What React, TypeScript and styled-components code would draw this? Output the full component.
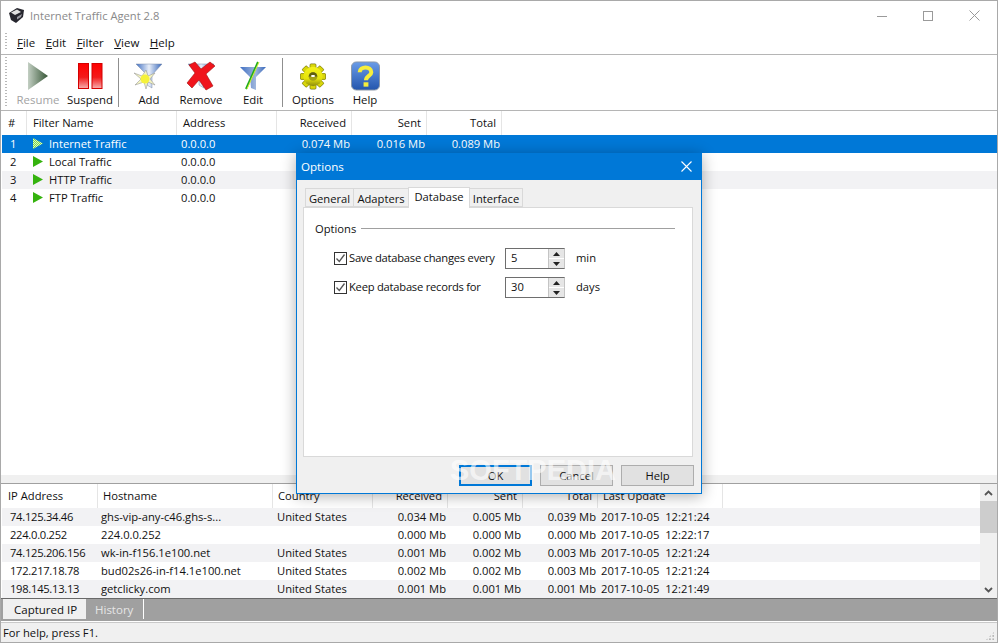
import styled, { createGlobalStyle } from "styled-components";

const GlobalStyle = createGlobalStyle`
  html, body { margin: 0; padding: 0; background: #fff; }
  body { font-family: "Open Sans", "Noto Sans", "Liberation Sans", sans-serif; font-size: 11.2px; color: #111; }
  * { box-sizing: border-box; }
`;

const Window = styled.div`
  position: relative;
  width: 998px;
  height: 643px;
  border: 1px solid #a9a9a9;
  display: flex;
  flex-direction: column;
  overflow: hidden;
  background: #fff;
`;

const TitleBar = styled.div`
  height: 29px;
  display: flex;
  align-items: center;
  padding-left: 7px;
  flex: none;
`;

const TitleText = styled.span`
  margin-left: 5px;
  color: #8a8a8a;
  font-size: 11.2px;
  flex: 1;
`;

const WinButton = styled.div`
  width: 46px;
  height: 29px;
  display: flex;
  align-items: center;
  justify-content: center;
`;

const MenuBar = styled.div`
  height: 25px;
  display: flex;
  align-items: center;
  gap: 10.5px;
  padding-left: 16px;
  font-size: 11.5px;
  border-bottom: 1px solid #b5b5b5;
  flex: none;
  position: relative;
`;

const MenuItem = styled.span`
  u { text-decoration: underline; }
`;

const Grip = styled.div<{ $top: number; $height: number }>`
  position: absolute;
  left: 4px;
  top: ${(p) => p.$top}px;
  height: ${(p) => p.$height}px;
  width: 2px;
  background-image: linear-gradient(#b8b8b8 50%, transparent 50%);
  background-size: 2px 3px;
`;

const Toolbar = styled.div`
  height: 56px;
  display: flex;
  padding-left: 11px;
  font-size: 11.4px;
  border-bottom: 1px solid #b5b5b5;
  flex: none;
  position: relative;
`;

const ToolButton = styled.div<{ $disabled?: boolean }>`
  width: 52px;
  display: flex;
  flex-direction: column;
  align-items: center;
  padding-top: 5px;
  color: ${(p) => (p.$disabled ? "#a3a3a3" : "#111")};
`;

const ToolIcon = styled.div`
  height: 32px;
  display: flex;
  align-items: center;
  justify-content: center;
`;

const ToolLabel = styled.span`
  white-space: nowrap;
`;

const ToolSep = styled.div<{ $left: number }>`
  width: 1px;
  margin: 3px 4px 3px ${(p) => p.$left}px;
  background: #8f8f8f;
`;

const UpperList = styled.div`
  flex: 1;
  display: flex;
  flex-direction: column;
  padding-left: 1px;
  min-height: 0;
`;

const upperCols = "25px 150px 100px 75px 75px 75px 1fr";
const lowerCols = "96px 175px 100px 75px 75px 75px 125px 1fr";

const HeaderRow = styled.div<{ $cols: string; $height: number }>`
  display: grid;
  grid-template-columns: ${(p) => p.$cols};
  height: ${(p) => p.$height}px;
  flex: none;
`;

const HeaderCell = styled.div<{ $right?: boolean; $pad: number; $noLine?: boolean }>`
  display: flex;
  align-items: center;
  justify-content: ${(p) => (p.$right ? "flex-end" : "flex-start")};
  padding: ${(p) => (p.$right ? `0 ${p.$pad}px 2px 0` : `0 0 2px ${p.$pad}px`)};
  border-right: ${(p) => (p.$noLine ? "none" : "1px solid #e5e5e5")};
  white-space: nowrap;
`;

const DataRow = styled.div<{ $cols: string; $bg: string; $fg?: string }>`
  display: grid;
  grid-template-columns: ${(p) => p.$cols};
  height: 18px;
  padding-bottom: 2px;
  align-items: center;
  background: ${(p) => p.$bg};
  color: ${(p) => p.$fg || "#111"};
  flex: none;
`;

const Cell = styled.div<{ $right?: boolean; $pad: number; $keepSpaces?: boolean; $tight?: boolean }>`
  padding: ${(p) => (p.$right ? `0 ${p.$pad}px 0 0` : `0 0 0 ${p.$pad}px`)};
  white-space: ${(p) => (p.$keepSpaces ? "pre" : "nowrap")};
  letter-spacing: ${(p) => (p.$tight ? "-0.28px" : "normal")};
  display: flex;
  align-items: center;
  justify-content: ${(p) => (p.$right ? "flex-end" : "flex-start")};
`;

const NameIcon = styled.span`
  display: inline-flex;
  width: 16px;
`;

const Splitter = styled.div`
  height: 9px;
  flex: none;
  background: #f0f0f0;
  border-bottom: 1px solid #a0a0a0;
`;

const LowerPane = styled.div`
  height: 114px;
  flex: none;
  display: flex;
`;

const LowerList = styled.div`
  width: 979px;
  padding-left: 1px;
  display: flex;
  flex-direction: column;
`;

const ScrollBar = styled.div`
  width: 17px;
  background: #f0f0f0;
  display: flex;
  flex-direction: column;
  align-items: center;
  justify-content: space-between;
`;

const ScrollArrow = styled.div`
  height: 17px;
  width: 100%;
  display: flex;
  align-items: center;
  justify-content: center;
`;

const ScrollThumb = styled.div`
  height: 32px;
  width: 100%;
  background: #cdcdcd;
`;

const ScrollTrack = styled.div`
  flex: 1;
  width: 100%;
`;

const TabStrip = styled.div`
  height: 24px;
  flex: none;
  background: #a0a0a0;
  border-top: 1px solid #696969;
  border-bottom: 1px solid #fff;
  display: flex;
  padding-left: 2px;
  font-size: 11.5px;
`;

const BottomTab = styled.div<{ $active?: boolean }>`
  width: ${(p) => (p.$active ? "83px" : "58px")};
  height: 20px;
  display: flex;
  align-items: center;
  padding-left: ${(p) => (p.$active ? "11px" : "9px")};
  background: ${(p) => (p.$active ? "#f0f0f0" : "transparent")};
  color: ${(p) => (p.$active ? "#111" : "#e6e6e6")};
  border-right: ${(p) => (p.$active ? "none" : "1px solid #fff")};
`;

const StatusBar = styled.div`
  height: 20px;
  flex: none;
  background: #f0f0f0;
  border-top: 1px solid #c9c9c9;
  display: flex;
  align-items: center;
  justify-content: space-between;
  padding-left: 2px;
`;

const ResizeGrip = styled.div`
  width: 10px;
  height: 10px;
  margin: 7px 2px 0 0;
  background-image: radial-gradient(#b5b5b5 1px, transparent 1.2px);
  background-size: 3.3px 3.3px;
  clip-path: polygon(100% 0, 100% 100%, 0 100%);
`;

const Dialog = styled.div`
  position: absolute;
  left: 295px;
  top: 152px;
  width: 406px;
  height: 341px;
  background: #f0f0f0;
  border: 1px solid #0078d7;
  box-shadow: 0 2px 14px rgba(0, 0, 0, 0.32);
  display: flex;
  flex-direction: column;
`;

const DialogTitle = styled.div`
  height: 26px;
  flex: none;
  background: #0078d7;
  color: #fff;
  font-size: 11.6px;
  display: flex;
  align-items: center;
  justify-content: space-between;
  padding: 0 9px 2px 4px;
`;

const TabRow = styled.div`
  display: flex;
  align-items: flex-end;
  height: 27px;
  padding-left: 9px;
  flex: none;
`;

const DialogTab = styled.div<{ $active?: boolean; $w: number }>`
  width: ${(p) => p.$w}px;
  height: ${(p) => (p.$active ? "21px" : "19px")};
  display: flex;
  align-items: center;
  justify-content: center;
  padding: ${(p) => (p.$active ? "0 0 3px" : "1px 0 0")};
  background: ${(p) => (p.$active ? "#fff" : "#f0f0f0")};
  border: 1px solid #d9d9d9;
  border-bottom: ${(p) => (p.$active ? "none" : "1px solid #d9d9d9")};
  margin-left: -1px;
  position: relative;
  z-index: ${(p) => (p.$active ? 1 : 0)};
  top: ${(p) => (p.$active ? "1px" : "0")};
`;

const TabPanel = styled.div`
  margin: 0 8px 0 6px;
  height: 250px;
  flex: none;
  background: #fff;
  border: 1px solid #d9d9d9;
  padding: 13px 17px 0 11px;
`;

const GroupTitle = styled.div`
  display: flex;
  align-items: center;
  gap: 5px;
  height: 14px;
  margin-bottom: 13px;
`;

const GroupLine = styled.div`
  flex: 1;
  height: 1px;
  background: #a0a0a0;
`;

const OptionRow = styled.div`
  display: flex;
  align-items: center;
  height: 21px;
  margin-bottom: 8px;
  padding-left: 19px;
`;

const CheckBox = styled.div`
  width: 13px;
  height: 13px;
  border: 1px solid #333;
  background: #fff;
  display: flex;
  align-items: center;
  justify-content: center;
  flex: none;
`;

const OptionLabel = styled.span`
  width: 158px;
  padding: 0 0 2px 2px;
  letter-spacing: -0.24px;
  white-space: nowrap;
`;

const Spin = styled.div`
  width: 60px;
  height: 21px;
  display: flex;
  border: 1px solid #c4c4c4;
  border-top-color: #6e6e6e;
  border-left-color: #6e6e6e;
  border-bottom-color: #6e6e6e;
  background: #fff;
`;

const SpinValue = styled.div`
  flex: 1;
  padding: 0 0 2px 5px;
  display: flex;
  align-items: center;
`;

const SpinArrows = styled.div`
  width: 16px;
  display: flex;
  flex-direction: column;
  gap: 1px;
  background: #fff;
  border-left: 1px solid #c4c4c4;
`;

const SpinArrow = styled.div`
  flex: 1;
  background: #e6e6e6;
  display: flex;
  align-items: center;
  justify-content: center;
`;

const Unit = styled.span`
  margin-left: 11px;
  padding-bottom: 2px;
`;

const ButtonRow = styled.div`
  display: flex;
  justify-content: flex-end;
  gap: 8px;
  padding: 8px 7px 0 0;
`;

const DialogButton = styled.div<{ $default?: boolean }>`
  width: 73px;
  height: 21px;
  display: flex;
  align-items: center;
  justify-content: center;
  background: #e1e1e1;
  border: ${(p) => (p.$default ? "2px solid #0078d7" : "1px solid #adadad")};
`;

const Watermark = styled.div`
  position: absolute;
  left: 449px;
  top: 453px;
  font-family: "Liberation Sans", sans-serif;
  font-size: 29px;
  font-weight: 700;
  color: rgba(255, 255, 255, 0.62);
  white-space: nowrap;
  pointer-events: none;
`;

function AppIcon() {
  return (
    <svg width="17" height="17" viewBox="0 0 17 17">
      <path d="M1 6 L9 1 L16 3 L15 10 L8 16 L3 13 Z" fill="#26262e" />
      <path d="M3 5.5 L9 2.5 L13 5 L7 8 Z" fill="#e2e2e2" />
      <path d="M9 10 L14 7 L13 10 L9 12.5 Z" fill="#9a9aa2" />
    </svg>
  );
}

function Funnel({ id }: { id: string }) {
  return (
    <>
      <defs>
        <linearGradient id={id} x1="0" x2="1" y1="0" y2="0">
          <stop offset="0" stopColor="#3f6fc4" />
          <stop offset="0.5" stopColor="#e8eef8" />
          <stop offset="1" stopColor="#3566bb" />
        </linearGradient>
      </defs>
      <path d="M3 3 H29 L19 14 V27 L14 24 V14 Z" fill={`url(#${id})`} stroke="#7f8fa8" strokeWidth="0.5" />
    </>
  );
}

function ResumeIcon() {
  return (
    <svg width="22" height="30" viewBox="0 0 22 30">
      <defs>
        <linearGradient id="res" x1="0" x2="1" y1="0" y2="0">
          <stop offset="0" stopColor="#c3cfc3" />
          <stop offset="1" stopColor="#355535" />
        </linearGradient>
      </defs>
      <path d="M1 1 L21 15 L1 29 Z" fill="url(#res)" />
    </svg>
  );
}

function SuspendIcon() {
  return (
    <svg width="25" height="27" viewBox="0 0 25 27">
      <defs>
        <linearGradient id="sus" x1="0" x2="0" y1="0" y2="1">
          <stop offset="0" stopColor="#ff0000" />
          <stop offset="0.55" stopColor="#f31a1a" />
          <stop offset="1" stopColor="#f6b0b0" />
        </linearGradient>
      </defs>
      <rect x="0.5" y="0.5" width="10" height="25" fill="url(#sus)" stroke="#d40000" />
      <rect x="14" y="0.5" width="10" height="25" fill="url(#sus)" stroke="#d40000" />
    </svg>
  );
}

function AddIcon() {
  return (
    <svg width="32" height="30" viewBox="0 0 32 30">
      <Funnel id="fa" />
      <path
        d="M13 9 L15 15 L22 12 L17 18 L22 24 L15 21 L13 28 L11 21 L2 24 L8 18 L1 12 L9 15 Z"
        fill="#f5f5c0"
        stroke="#9a9a9a"
        strokeWidth="0.6"
      />
      <circle cx="12" cy="18" r="4.5" fill="#f5f23a" />
    </svg>
  );
}

function RemoveIcon() {
  return (
    <svg width="32" height="30" viewBox="0 0 32 30">
      <Funnel id="fr" />
      <path
        d="M4 4 L10 1 L16 8 L25 1 L30 5 L21 13 L28 25 L21 29 L14 19 L7 27 L2 22 L10 12 Z"
        fill="#f0141c"
        stroke="#a01010"
        strokeWidth="0.6"
      />
    </svg>
  );
}

function EditIcon() {
  return (
    <svg width="28" height="30" viewBox="0 0 28 30">
      <defs>
        <linearGradient id="fe" x1="0" x2="1" y1="0" y2="0">
          <stop offset="0" stopColor="#3f6fc4" />
          <stop offset="0.6" stopColor="#9fb6dc" />
          <stop offset="1" stopColor="#3566bb" />
        </linearGradient>
      </defs>
      <path d="M1 6 H27 L17 16 L17 29 L12 27 L11 16 Z" fill="url(#fe)" />
      <path d="M19 1 L7 28" stroke="#1faa1f" strokeWidth="2" />
      <path d="M20 1 L8 28" stroke="#d8f03a" strokeWidth="1" />
    </svg>
  );
}

function OptionsIcon() {
  const teeth = [0, 45, 90, 135, 180, 225, 270, 315];
  return (
    <svg width="26" height="27" viewBox="0 0 26 28">
      <defs>
        <linearGradient id="gear" x1="0" x2="0" y1="0" y2="1">
          <stop offset="0" stopColor="#f4f21a" />
          <stop offset="0.6" stopColor="#e6e40c" />
          <stop offset="1" stopColor="#8d8b10" />
        </linearGradient>
      </defs>
      <g fill="#d9d60a" stroke="#6d6c10" strokeWidth="0.5">
        {teeth.map((a) => (
          <rect key={a} x="10" y="1" width="6" height="26" rx="1" transform={`rotate(${a} 13 14)`} />
        ))}
      </g>
      <circle cx="13" cy="14" r="10" fill="url(#gear)" />
      <circle cx="13" cy="14" r="4.5" fill="#a3a116" />
      <path d="M8.5 14 a4.5 4.5 0 0 1 9 0 z" fill="#5f5e10" />
      <rect x="11" y="12.5" width="4" height="2" rx="1" fill="#fff" />
    </svg>
  );
}

function HelpIcon() {
  return (
    <svg width="29" height="30" viewBox="0 0 30 30">
      <defs>
        <linearGradient id="hlp" x1="0" x2="0" y1="0" y2="1">
          <stop offset="0" stopColor="#6a9ce8" />
          <stop offset="1" stopColor="#2456ad" />
        </linearGradient>
      </defs>
      <rect x="0.5" y="0.5" width="29" height="29" rx="5" fill="url(#hlp)" stroke="#8a97a8" />
      <path d="M9 11 C9 4.5 21 4.5 21 11 C21 15 15.5 15 15.5 19.5" fill="none" stroke="#f6ee3c" strokeWidth="4.2" />
      <rect x="13" y="21.5" width="5" height="4.5" fill="#f6ee3c" />
    </svg>
  );
}

function PlayArrow({ active }: { active?: boolean }) {
  return (
    <svg width="10" height="11" viewBox="0 0 10 11">
      <defs>
        <pattern id="dots" width="2" height="2" patternUnits="userSpaceOnUse">
          <rect width="1" height="1" fill="#7fe03a" />
          <rect x="1" y="1" width="1" height="1" fill="#7fe03a" />
          <rect x="1" width="1" height="1" fill="#d8f0d0" />
          <rect y="1" width="1" height="1" fill="#d8f0d0" />
        </pattern>
      </defs>
      <path d="M0 0 L10 5.5 L0 11 Z" fill={active ? "url(#dots)" : "#35b30e"} />
    </svg>
  );
}

const Check = () => (
  <svg width="11" height="11" viewBox="0 0 11 11">
    <path d="M1.5 5.5 L4.3 8.5 L9.5 1.5" fill="none" stroke="#555" strokeWidth="1.3" />
  </svg>
);

const Tri = ({ up }: { up?: boolean }) => (
  <svg width="7" height="4" viewBox="0 0 7 4">
    <path d={up ? "M3.5 0 L7 4 H0 Z" : "M0 0 H7 L3.5 4 Z"} fill="#222" />
  </svg>
);

const Chevron = ({ up }: { up?: boolean }) => (
  <svg width="9" height="6" viewBox="0 0 9 6">
    <path d={up ? "M1 5 L4.5 1.5 L8 5" : "M1 1 L4.5 4.5 L8 1"} fill="none" stroke="#555" strokeWidth="1.8" />
  </svg>
);

const filters = [
  { n: "1", name: "Internet Traffic", r: "0.074 Mb", s: "0.016 Mb", t: "0.089 Mb" },
  { n: "2", name: "Local Traffic" },
  { n: "3", name: "HTTP Traffic" },
  { n: "4", name: "FTP Traffic" },
];

const captured = [
  ["74.125.34.46", "ghs-vip-any-c46.ghs-s...", "United States", "0.034 Mb", "0.005 Mb", "0.039 Mb", "2017-10-05  12:21:24"],
  ["224.0.0.252", "224.0.0.252", "", "0.000 Mb", "0.000 Mb", "0.000 Mb", "2017-10-05  12:22:17"],
  ["74.125.206.156", "wk-in-f156.1e100.net", "United States", "0.001 Mb", "0.002 Mb", "0.003 Mb", "2017-10-05  12:21:24"],
  ["172.217.18.78", "bud02s26-in-f14.1e100.net", "United States", "0.002 Mb", "0.002 Mb", "0.003 Mb", "2017-10-05  12:21:24"],
  ["198.145.13.13", "getclicky.com", "United States", "0.001 Mb", "0.001 Mb", "0.001 Mb", "2017-10-05  12:21:49"],
];

function MenuLabel({ text }: { text: string }) {
  return (
    <MenuItem>
      <u>{text[0]}</u>
      {text.slice(1)}
    </MenuItem>
  );
}

export default function App() {
  return (
    <>
      <GlobalStyle />
      <Window>
        <TitleBar>
          <AppIcon />
          <TitleText>Internet Traffic Agent 2.8</TitleText>
          <WinButton>
            <svg width="10" height="10" viewBox="0 0 10 10">
              <path d="M0 5.5 H10" stroke="#9a9a9a" />
            </svg>
          </WinButton>
          <WinButton>
            <svg width="10" height="10" viewBox="0 0 10 10">
              <rect x="0.5" y="0.5" width="9" height="9" fill="none" stroke="#9a9a9a" />
            </svg>
          </WinButton>
          <WinButton>
            <svg width="11" height="11" viewBox="0 0 11 11">
              <path d="M0.5 0.5 L10.5 10.5 M10.5 0.5 L0.5 10.5" stroke="#9a9a9a" />
            </svg>
          </WinButton>
        </TitleBar>
        <MenuBar>
          <Grip $top={3} $height={18} />
          {["File", "Edit", "Filter", "View", "Help"].map((m) => (
            <MenuLabel key={m} text={m} />
          ))}
        </MenuBar>
        <Toolbar>
          <Grip $top={2} $height={51} />
          <ToolButton $disabled>
            <ToolIcon>
              <ResumeIcon />
            </ToolIcon>
            <ToolLabel>Resume</ToolLabel>
          </ToolButton>
          <ToolButton>
            <ToolIcon>
              <SuspendIcon />
            </ToolIcon>
            <ToolLabel>Suspend</ToolLabel>
          </ToolButton>
          <ToolSep $left={2} />
          <ToolButton>
            <ToolIcon>
              <AddIcon />
            </ToolIcon>
            <ToolLabel>Add</ToolLabel>
          </ToolButton>
          <ToolButton>
            <ToolIcon>
              <RemoveIcon />
            </ToolIcon>
            <ToolLabel>Remove</ToolLabel>
          </ToolButton>
          <ToolButton>
            <ToolIcon>
              <EditIcon />
            </ToolIcon>
            <ToolLabel>Edit</ToolLabel>
          </ToolButton>
          <ToolSep $left={3} />
          <ToolButton>
            <ToolIcon>
              <OptionsIcon />
            </ToolIcon>
            <ToolLabel>Options</ToolLabel>
          </ToolButton>
          <ToolButton>
            <ToolIcon>
              <HelpIcon />
            </ToolIcon>
            <ToolLabel>Help</ToolLabel>
          </ToolButton>
        </Toolbar>
        <UpperList>
          <HeaderRow $cols={upperCols} $height={24}>
            <HeaderCell $pad={6}>#</HeaderCell>
            <HeaderCell $pad={6}>Filter Name</HeaderCell>
            <HeaderCell $pad={6}>Address</HeaderCell>
            <HeaderCell $right $pad={5}>Received</HeaderCell>
            <HeaderCell $right $pad={5}>Sent</HeaderCell>
            <HeaderCell $right $pad={5}>Total</HeaderCell>
            <HeaderCell $pad={0} $noLine />
          </HeaderRow>
          {filters.map((f, i) => (
            <DataRow
              key={f.n}
              $cols={upperCols}
              $bg={i === 0 ? "#0078d7" : i === 2 ? "#f2f2f4" : "#fff"}
              $fg={i === 0 ? "#fff" : undefined}
            >
              <Cell $pad={8}>{f.n}</Cell>
              <Cell $pad={6}>
                <NameIcon>
                  <PlayArrow active={i === 0} />
                </NameIcon>
                {f.name}
              </Cell>
              <Cell $pad={4}>0.0.0.0</Cell>
              <Cell $right $pad={2}>{f.r}</Cell>
              <Cell $right $pad={2}>{f.s}</Cell>
              <Cell $right $pad={2}>{f.t}</Cell>
            </DataRow>
          ))}
        </UpperList>
        <Splitter />
        <LowerPane>
          <LowerList>
            <HeaderRow $cols={lowerCols} $height={24}>
              <HeaderCell $pad={6}>IP Address</HeaderCell>
              <HeaderCell $pad={5}>Hostname</HeaderCell>
              <HeaderCell $pad={5}>Country</HeaderCell>
              <HeaderCell $right $pad={5}>Received</HeaderCell>
              <HeaderCell $right $pad={5}>Sent</HeaderCell>
              <HeaderCell $right $pad={5}>Total</HeaderCell>
              <HeaderCell $pad={5}>Last Update</HeaderCell>
              <HeaderCell $pad={0} $noLine />
            </HeaderRow>
            {captured.map((r, i) => (
              <DataRow key={r[0]} $cols={lowerCols} $bg={i % 2 === 0 ? "#f2f2f4" : "#fff"}>
                <Cell $pad={8} $tight>{r[0]}</Cell>
                <Cell $pad={3}>{r[1]}</Cell>
                <Cell $pad={4}>{r[2]}</Cell>
                <Cell $right $pad={2}>{r[3]}</Cell>
                <Cell $right $pad={2}>{r[4]}</Cell>
                <Cell $right $pad={2}>{r[5]}</Cell>
                <Cell $pad={3} $keepSpaces>{r[6]}</Cell>
              </DataRow>
            ))}
          </LowerList>
          <ScrollBar>
            <ScrollArrow>
              <Chevron up />
            </ScrollArrow>
            <ScrollThumb />
            <ScrollTrack />
            <ScrollArrow>
              <Chevron />
            </ScrollArrow>
          </ScrollBar>
        </LowerPane>
        <TabStrip>
          <BottomTab $active>Captured IP</BottomTab>
          <BottomTab>History</BottomTab>
        </TabStrip>
        <StatusBar>
          For help, press F1.
          <ResizeGrip />
        </StatusBar>

        <Dialog>
          <DialogTitle>
            Options
            <svg width="11" height="11" viewBox="0 0 11 11">
              <path d="M0.5 0.5 L10.5 10.5 M10.5 0.5 L0.5 10.5" stroke="#fff" strokeWidth="1.1" />
            </svg>
          </DialogTitle>
          <TabRow>
            <DialogTab $w={49}>General</DialogTab>
            <DialogTab $w={56}>Adapters</DialogTab>
            <DialogTab $w={62} $active>Database</DialogTab>
            <DialogTab $w={54}>Interface</DialogTab>
          </TabRow>
          <TabPanel>
            <GroupTitle>
              Options
              <GroupLine />
            </GroupTitle>
            <OptionRow>
              <CheckBox>
                <Check />
              </CheckBox>
              <OptionLabel>Save database changes every</OptionLabel>
              <Spin>
                <SpinValue>5</SpinValue>
                <SpinArrows>
                  <SpinArrow>
                    <Tri up />
                  </SpinArrow>
                  <SpinArrow>
                    <Tri />
                  </SpinArrow>
                </SpinArrows>
              </Spin>
              <Unit>min</Unit>
            </OptionRow>
            <OptionRow>
              <CheckBox>
                <Check />
              </CheckBox>
              <OptionLabel>Keep database records for</OptionLabel>
              <Spin>
                <SpinValue>30</SpinValue>
                <SpinArrows>
                  <SpinArrow>
                    <Tri up />
                  </SpinArrow>
                  <SpinArrow>
                    <Tri />
                  </SpinArrow>
                </SpinArrows>
              </Spin>
              <Unit>days</Unit>
            </OptionRow>
          </TabPanel>
          <ButtonRow>
            <DialogButton $default>OK</DialogButton>
            <DialogButton>Cancel</DialogButton>
            <DialogButton>Help</DialogButton>
          </ButtonRow>
        </Dialog>
        <Watermark>SOFTPEDIA</Watermark>
      </Window>
    </>
  );
}
